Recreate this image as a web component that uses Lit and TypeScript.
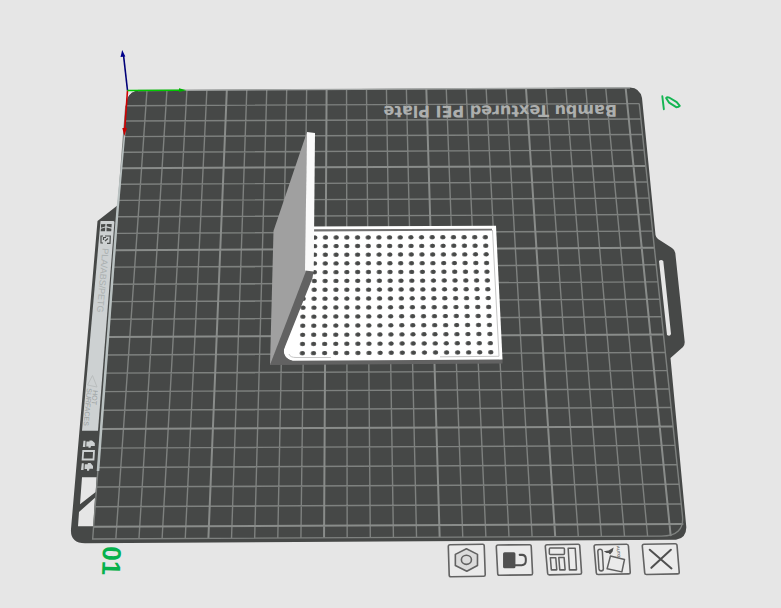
import { LitElement, html, svg, css } from "lit";
import { customElement } from "lit/decorators.js";

type Point = [number, number];

/** Maps the unit square onto a quadrilateral seen in perspective. */
function perspective(a: Point, b: Point, c: Point, d: Point) {
  const dx1 = b[0] - c[0], dx2 = d[0] - c[0], sx = a[0] - b[0] + c[0] - d[0];
  const dy1 = b[1] - c[1], dy2 = d[1] - c[1], sy = a[1] - b[1] + c[1] - d[1];
  const det = dx1 * dy2 - dx2 * dy1;
  const g = (sx * dy2 - dx2 * sy) / det;
  const h = (dx1 * sy - sx * dy1) / det;
  return (u: number, v: number): Point => {
    const w = g * u + h * v + 1;
    return [
      ((b[0] - a[0] + g * b[0]) * u + (d[0] - a[0] + h * d[0]) * v + a[0]) / w,
      ((b[1] - a[1] + g * b[1]) * u + (d[1] - a[1] + h * d[1]) * v + a[1]) / w,
    ];
  };
}

// Plate grid: one cell is a centimetre, every fifth line is heavy.
const CELLS = 25;
const EDGE = 25.6;
const plate = perspective([127, 90.5], [625.7, 88.5], [669.5, 524], [93.6, 526.8]);
const onPlate = (x: number, y: number) => plate(x / CELLS, y / CELLS);

const HOLE_COLS = 18;
const HOLE_ROWS = 14;
const onPanel = perspective([304, 237.6], [485.3, 237.2], [490.7, 352.3], [302.3, 353.2]);

const TOOLS = [
  {
    label: "Plate settings",
    frame: "M2 .7 34.5 .2Q36 .2 36 2L37 30.5Q37 32 35.5 32L3 32.5Q1.2 32.5 1.2 31L.3 2.5Q.3 .7 2 .7Z",
    icon: svg`<path class="soft" d="M18.3 4.7 29.3 10.3V21.3L18.7 27 7.3 21.3V10.3Z"/>
      <ellipse class="soft" cx="18.3" cy="15.7" rx="5" ry="4.5"/>`,
  },
  {
    label: "Lock plate",
    frame: "M2 1 33.5 .7Q35 .7 35 2.5L36.3 29Q36.3 30.7 34.7 30.7L3.5 31Q1.7 31 1.7 29.5L.3 2.7Q.3 1 2 1Z",
    icon: svg`<rect class="solid" x="7" y="8.3" width="12.3" height="15.7" rx="1.5"/>
      <path class="thick" d="M19 21H25.5Q29.6 21 29.6 17V14.5Q29.3 10.8 26 10.8H23.5"/>`,
  },
  {
    label: "Arrange objects",
    frame: "M2 .7 33 .2Q34.5 .2 34.5 2L36.3 28.5Q36.3 30 34.7 30L4.3 30.7Q2.7 30.7 2.6 29L.3 2.5Q.3 .7 2 .7Z",
    icon: svg`<rect class="line" x="4.3" y="4" width="15" height="6.5" rx="1"/>
      <path class="line" d="M23 4.3H30L31.3 25.7H24.3ZM5.3 13.7H10.7L11.7 25.7H6.3ZM13.7 13.5H19L20 25.7H14.7Z"/>`,
  },
  {
    label: "Auto orient",
    frame: "M2 .7 32.5 .2Q34 .2 34.2 2L36 28Q36 29.7 34.3 29.7L4 30.3Q2.4 30.3 2.3 28.7L.1 2.5Q.1 .7 2 .7Z",
    icon: svg`<path class="line" d="M3.8 7.5Q3.8 5.3 6 5.3T8.3 7.5L9.3 24.5Q9.3 26.7 7.2 26.7T4.9 24.5ZM16.3 12 30.3 15.3 27.7 27.7 13 24.7Z"/>
      <path class="solid" d="M9.7 7.3 14.5 6.5 19.5 3.5 18.5 7.5 16 10.5 14.5 9 12.5 9Z"/>
      <text class="tiny" transform="translate(22.5 2) rotate(86)">AUTO</text>`,
  },
  {
    label: "Delete plate",
    frame: "M1 .3 32 -.3Q33.7 -.3 33.8 1.5L36 28Q36 29.7 34.3 29.7L3.5 30.3Q1.8 30.3 1.7 28.7L-.7 2Q-.7 .3 1 .3Z",
    icon: svg`<path class="thick" d="M6.7 5.7 28.3 24.3M27.7 5.7 8.3 23.7"/>`,
  },
];

@customElement("app-root")
export class AppRoot extends LitElement {
  static styles = css`
    :host {
      display: block;
      min-height: 100vh;
      background: #e6e6e6;
    }
    .viewport {
      position: relative;
      overflow: hidden;
    }
    .scene {
      display: block;
      width: 100%;
      height: auto;
    }
    .sheet { fill: #464847; }
    .opening { fill: #e6e6e6; }
    .grid { fill: none; stroke: #7e817f; stroke-width: 1.4; }
    .major { fill: none; stroke: #898c8a; stroke-width: 2; }
    .rim { fill: none; stroke: #a3a6a5; stroke-width: 1.4; }
    .strip { fill: #b9c1c1; }
    .label { fill: #cdd1d2; }
    .mark { fill: #4b4e4d; }
    .outline { fill: none; stroke: #4b4e4d; stroke-width: 1.2; }
    .pale { fill: #cdd1d2; }
    .pale-line { fill: none; stroke: #cdd1d2; stroke-width: 1.8; }
    .name {
      font: bold 16px "DejaVu Sans", sans-serif;
      fill: #adafae;
    }
    .number {
      font: bold 26px "Liberation Sans", sans-serif;
      fill: #06b14c;
    }
    .print {
      font: 9px "Liberation Sans", sans-serif;
      fill: #abb0b0;
    }
    .warn {
      font: 7px "Liberation Sans", sans-serif;
      fill: #9a9f9f;
    }
    .triangle { fill: none; stroke: #babebe; stroke-width: 1; }
    .white { fill: #ffffff; }
    .edge-white { fill: #fafafa; }
    .wall { fill: #a0a0a0; }
    .under { fill: #626262; }
    .groove { fill: #707070; }
    .crease { fill: none; stroke: #c6c6c6; stroke-width: 1; }
    .hole { fill: #474948; }
    .hole-lit { fill: #777; }
    .x { fill: #c80000; stroke: #d00000; }
    .y { fill: #00b400; stroke: #00c800; }
    .z { fill: #00008c; stroke: #000078; }
    .axis { stroke-width: 1.6; }
    .tip { stroke: none; }
    button {
      display: block;
      padding: 0;
      border: 0;
      background: none;
      cursor: pointer;
    }
    button svg {
      display: block;
      width: 100%;
      height: auto;
      overflow: visible;
    }
    .tools {
      position: absolute;
      left: 57.3%;
      top: 89.4%;
      width: 29.8%;
      display: grid;
      grid-template-columns: repeat(5, 1fr);
      column-gap: 5%;
    }
    .edit {
      position: absolute;
      left: 84.6%;
      top: 15.6%;
      width: 2.6%;
    }
    .frame { fill: #ebebeb; stroke: #636363; stroke-width: 1.6; }
    .line { fill: none; stroke: #606060; stroke-width: 1.5; stroke-linejoin: round; }
    .soft { fill: #dbdbdb; stroke: #626262; stroke-width: 1.6; stroke-linejoin: round; }
    .thick { fill: none; stroke: #505050; stroke-width: 2; stroke-linecap: round; }
    .solid { fill: #505050; }
    .tiny { font: bold 4px "Liberation Sans", sans-serif; fill: #666; }
    .pencil { fill: none; stroke: #14b552; stroke-width: 1.9; stroke-linejoin: round; stroke-linecap: round; }
  `;

  private segment(from: Point, to: Point) {
    return `M${from.map((n) => n.toFixed(2))}L${to.map((n) => n.toFixed(2))}`;
  }

  private gridPath(major: boolean) {
    let d = "";
    for (let i = 1; i <= CELLS; i++) {
      if ((i % 5 === 0) !== major) continue;
      d += this.segment(onPlate(i, 0), onPlate(i, EDGE));
      d += this.segment(onPlate(0, i), onPlate(EDGE, i));
    }
    return d;
  }

  private borderPath() {
    const p = (x: number, y: number) => onPlate(x, y).map((n) => n.toFixed(2)).join(" ");
    return `M${p(0, 1)}L${p(0, EDGE)}L${p(24.6, EDGE)}Q${p(EDGE, EDGE)} ${p(EDGE, 24.6)}L${p(EDGE, 1)}`;
  }

  private holes() {
    const out = [];
    for (let r = 0; r < HOLE_ROWS; r++) {
      for (let c = 0; c < HOLE_COLS; c++) {
        const [x, y] = onPanel(c / (HOLE_COLS - 1), r / (HOLE_ROWS - 1));
        out.push(svg`<ellipse class="hole-lit" cx=${x.toFixed(2)} cy=${y.toFixed(2)} rx="2.7" ry="2.2"/>
          <ellipse class="hole" cx=${(x + 0.3).toFixed(2)} cy=${(y - 0.1).toFixed(2)} rx="2" ry="1.9"/>`);
      }
    }
    return out;
  }

  private drawPlate() {
    return svg`
      <path class="sheet" d="M140 90.2 630 87.5Q640 88 642 98L655.5 235Q656 237.5 658 239L672 248Q675 250 675.3 253L684.7 342Q684.8 345 683 347L670.5 358 686.3 527Q686.5 538 676 539.7L85 543.3Q70 543 71 529L97.5 221 118 205 127 100Q130 91 140 90.2Z"/>
      <path class="opening" d="M659 261Q661 259 663.3 261L671 334Q670 337 667 335ZM82 477.3H96.7L95.7 492 80 504.3ZM95 497.7 93.3 526.2H78L79 512Z"/>
      <path class="grid" d=${this.gridPath(false)}/>
      <path class="major" d=${this.gridPath(true)}/>
      <path class="grid" d=${this.borderPath()}/>
      <path class="sheet" d="M127.5 104V98Q131 91 140 90.2L139 95Z"/>
      <path class="rim" d="M138 90.5 630 87.8"/>
      <path class="strip" d="M124.5 130H125.7L118.5 212 99.3 471H96.7L116.3 210Z"/>
      <path class="label" d="M100.5 221H113Q114.5 221 114.4 222.5L98 430.7H82Z"/>
      <path class="mark" d="M101 224.3 105.4 224 105.2 226.5 101 227.7ZM101 228.8 105.2 227.6 105 231.2H100.7ZM106.8 224H111.7L111.5 227.5 106.7 226.2ZM106.6 227.5 111.4 228.8 111.2 231.2H106.5Z"/>
      <path class="outline" d="M103 236H101V243H103M107 243.3H110L110.3 236H105M103.5 240V237.5H106M105 241 108 238.5"/>
      <text class="print" transform="translate(102.5 248) rotate(95)">PLA/ABS/PETG</text>
      <path class="triangle" d="M87.5 385 92.5 375.5 97 387Z"/>
      <text class="warn" transform="translate(93 390) rotate(95)">HOT</text>
      <text class="warn" transform="translate(87 388) rotate(95)">SURFACES</text>
      <path class="pale" d="M83.5 440.7H85.5L85.3 447H82.8ZM86.5 441.5H89.5V440.5H92L94.8 443V446H91L90.5 447.7H88.5V446.5H86.2ZM81.8 463.3H83.8L83.5 470H81ZM84.8 464.3H87.8V463H90.5L93 466V468.7H89.5L89 470.7H87V469H84.5Z"/>
      <path class="pale-line" d="M83.2 451H94L93.5 459.5H82.6Z"/>
      <text class="name" transform="translate(617 105) rotate(179.76)">Bambu Textured PEI Plate</text>
      <text class="number" transform="translate(103 546) rotate(92)">01</text>`;
  }

  private drawModel() {
    return svg`
      <path class="under" d="M270 365 283 352 292 360 502.5 359.5V363.5Z"/>
      <path class="white" d="M305 226.6 496 225.7 502.5 359.6 293 360.7Q285 360 283.5 352Z"/>
      <path class="groove" d="M312 229.2 492 228.7V230.5L312 231.5Z"/>
      <path class="crease" d="M492.5 230 499 356.3 440 356.8M289 354Q290 357.5 296 357.5H331"/>
      ${this.holes()}
      <path class="under" d="M304 270H313.7L312.5 278 283.7 350Q283.5 358 292 360.7L292 364.5 270 365Z"/>
      <path class="wall" d="M307 132 273.5 231 270 365 306 271Z"/>
      <path class="edge-white" d="M307 132 315 133 313.7 271.5 305 270.5Z"/>`;
  }

  private drawAxes() {
    return svg`
      <path class="axis z" d="M127.5 90.5 123.5 55"/>
      <path class="tip z" d="M122.2 50 125.3 56.5 120.5 57Z"/>
      <path class="axis x" d="M127.5 90.5 124.7 129"/>
      <path class="tip x" d="M122.3 128H127L124.3 136Z"/>
      <path class="axis y" d="M127.5 90.5 180 90.2"/>
      <path class="tip y" d="M179 88.3 186.5 90.2 179 91.9Z"/>`;
  }

  render() {
    return html`
      <main class="viewport">
        <svg class="scene" viewBox="0 0 781 608" role="img" aria-label="Build plate 01">
          ${this.drawPlate()} ${this.drawModel()} ${this.drawAxes()}
        </svg>
        <button class="edit" aria-label="Edit plate name">
          <svg viewBox="0 0 20 16">
            <path class="pencil" d="M1.3 1.3 2.8 14M5 3Q6 1.8 8 2.5L15.5 7 18.5 10.8Q17.5 12 15 12L8 7.5Z"/>
          </svg>
        </button>
        <nav class="tools" aria-label="Plate tools">
          ${TOOLS.map(
            (tool) => html`<button aria-label=${tool.label}>
              <svg viewBox="0 0 37 33"><path class="frame" d=${tool.frame} />${tool.icon}</svg>
            </button>`,
          )}
        </nav>
      </main>
    `;
  }
}
